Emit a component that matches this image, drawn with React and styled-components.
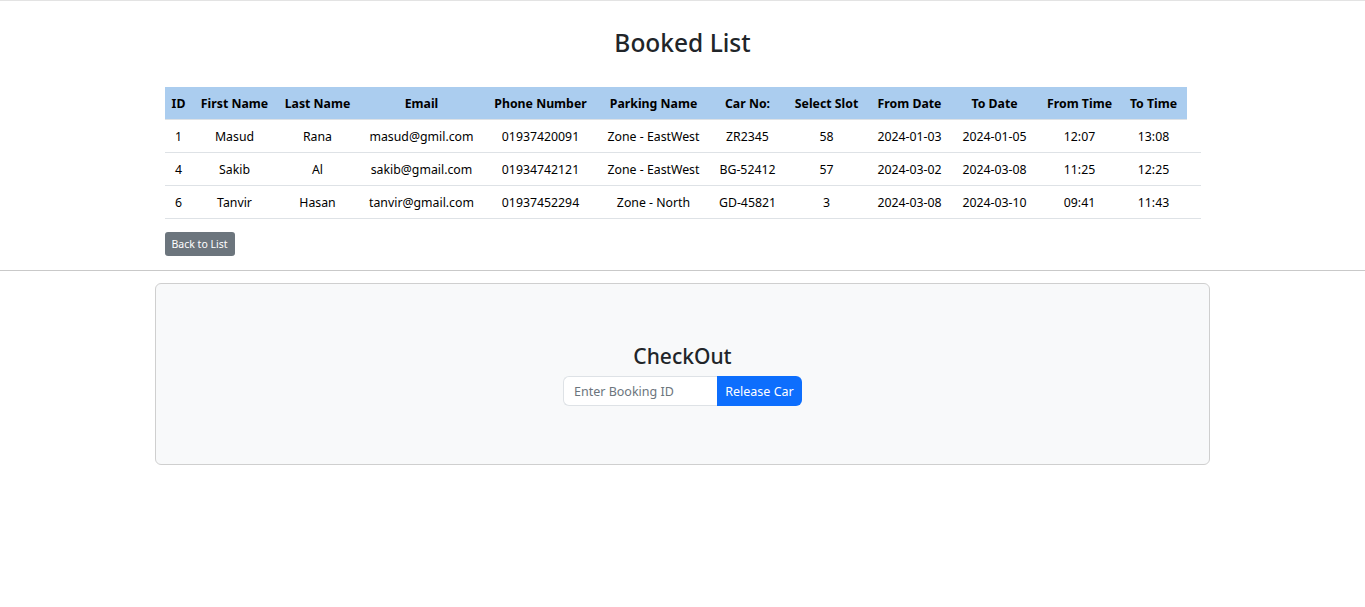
import React, { Component } from 'react';
import styled, { createGlobalStyle } from 'styled-components';

const GlobalStyle = createGlobalStyle`
    body {
        margin: 0;
        background: #fff;
        font-family: "Noto Sans", "Open Sans", sans-serif;
        color: #212529;
    }
`

const bookings = [
    { id: 1, first: 'Masud', last: 'Rana', email: 'masud@gmil.com', phone: '01937420091', parking: 'Zone - EastWest', car: 'ZR2345', slot: '58', fromDate: '2024-01-03', toDate: '2024-01-05', fromTime: '12:07', toTime: '13:08' },
    { id: 4, first: 'Sakib', last: 'Al', email: 'sakib@gmail.com', phone: '01934742121', parking: 'Zone - EastWest', car: 'BG-52412', slot: '57', fromDate: '2024-03-02', toDate: '2024-03-08', fromTime: '11:25', toTime: '12:25' },
    { id: 6, first: 'Tanvir', last: 'Hasan', email: 'tanvir@gmail.com', phone: '01937452294', parking: 'Zone - North', car: 'GD-45821', slot: '3', fromDate: '2024-03-08', toDate: '2024-03-10', fromTime: '09:41', toTime: '11:43' },
];

const columns = [
    { label: 'ID', width: 28 },
    { label: 'First Name', width: 84 },
    { label: 'Last Name', width: 82 },
    { label: 'Email', width: 126 },
    { label: 'Phone Number', width: 112 },
    { label: 'Parking Name', width: 114 },
    { label: 'Car No:', width: 74 },
    { label: 'Select Slot', width: 84 },
    { label: 'From Date', width: 82 },
    { label: 'To Date', width: 88 },
    { label: 'From Time', width: 82 },
    { label: 'To Time', width: 66 },
];

export default class App extends Component {
    constructor(props) {
        super(props);
        this.state = {
            bookingId: ''
        };
    }

    handleChange = (event) => {
        this.setState({ bookingId: event.target.value });
    }

    render() {
        return (<>
            <GlobalStyle />
            <Rule />
            <Section>
                <Title>Booked List</Title>
                <Table>
                    <colgroup>
                        {columns.map(c => <col key={c.label} style={{ width: c.width }} />)}
                        <col style={{ width: 14 }} />
                    </colgroup>
                    <thead>
                        <tr>
                            {columns.map(c => <Th key={c.label}>{c.label}</Th>)}
                        </tr>
                    </thead>
                    <tbody>
                        {bookings.map(b => (
                            <Tr key={b.id}>
                                <Td>{b.id}</Td>
                                <Td>{b.first}</Td>
                                <Td>{b.last}</Td>
                                <Td>{b.email}</Td>
                                <Td>{b.phone}</Td>
                                <Td>{b.parking}</Td>
                                <Td>{b.car}</Td>
                                <Td>{b.slot}</Td>
                                <Td>{b.fromDate}</Td>
                                <Td>{b.toDate}</Td>
                                <Td>{b.fromTime}</Td>
                                <Td>{b.toTime}</Td>
                                <Td />
                            </Tr>
                        ))}
                    </tbody>
                </Table>
                <BackButton>Back to List</BackButton>
            </Section>
            <Rule $dark />
            <Card>
                <SubTitle>CheckOut</SubTitle>
                <InputGroup>
                    <Input type="text" placeholder="Enter Booking ID" value={this.state.bookingId} onChange={this.handleChange} />
                    <ReleaseButton>Release Car</ReleaseButton>
                </InputGroup>
            </Card>
        </>
        )
    }
}

const Rule = styled.hr`
    margin: 0;
    border: 0;
    border-top: 1px solid ${p => p.$dark ? '#c9c9c9' : '#e3e3e3'};
`

const Section = styled.div`
    width: 1036px;
    margin: 0 auto;
    padding: 25px 0 14px;
    display: flex;
    flex-direction: column;
    align-items: flex-start;
`

const Title = styled.h3`
    align-self: stretch;
    text-align: center;
    font-size: 24.5px;
    font-weight: 500;
    line-height: 34px;
    margin: 0 0 27px;
`

const Table = styled.table`
    width: 100%;
    table-layout: fixed;
    border-collapse: collapse;
    font-size: 12.3px;
    text-align: center;
`

const Th = styled.th`
    background: #abcdef;
    color: #000;
    font-weight: 700;
    height: 32px;
    padding: 0;
    white-space: nowrap;
    border-bottom: 1px solid #dee2e6;
`

const Tr = styled.tr`
    border-bottom: 1px solid #dee2e6;
`

const Td = styled.td`
    height: 32px;
    padding: 0;
    white-space: nowrap;
    color: #000;
`

const BackButton = styled.button`
    margin-top: 13px;
    height: 24px;
    padding: 0 7px;
    border: 0;
    border-radius: 3px;
    background: #6c757d;
    color: #fff;
    font-family: inherit;
    font-size: 10.5px;
`

const Card = styled.div`
    width: 1055px;
    height: 182px;
    box-sizing: border-box;
    margin: 12px auto 0;
    background: #f8f9fa;
    border: 1px solid #cfcfcf;
    border-radius: 6px;
    display: flex;
    flex-direction: column;
    align-items: center;
    justify-content: center;
`

const SubTitle = styled.h4`
    font-size: 21px;
    font-weight: 500;
    line-height: 28px;
    margin: 0 0 6px;
`

const InputGroup = styled.div`
    display: flex;
    height: 30px;
`

const Input = styled.input`
    width: 154px;
    box-sizing: border-box;
    border: 1px solid #dee2e6;
    border-right: 0;
    border-radius: 6px 0 0 6px;
    padding: 0 10px;
    font-family: inherit;
    font-size: 12.5px;
    background: #fff;
    &::placeholder {
        color: #6c757d;
    }
`

const ReleaseButton = styled.button`
    width: 85px;
    border: 0;
    border-radius: 0 6px 6px 0;
    background: #0d6efd;
    color: #fff;
    font-family: inherit;
    font-size: 12.5px;
    padding: 0;
`
